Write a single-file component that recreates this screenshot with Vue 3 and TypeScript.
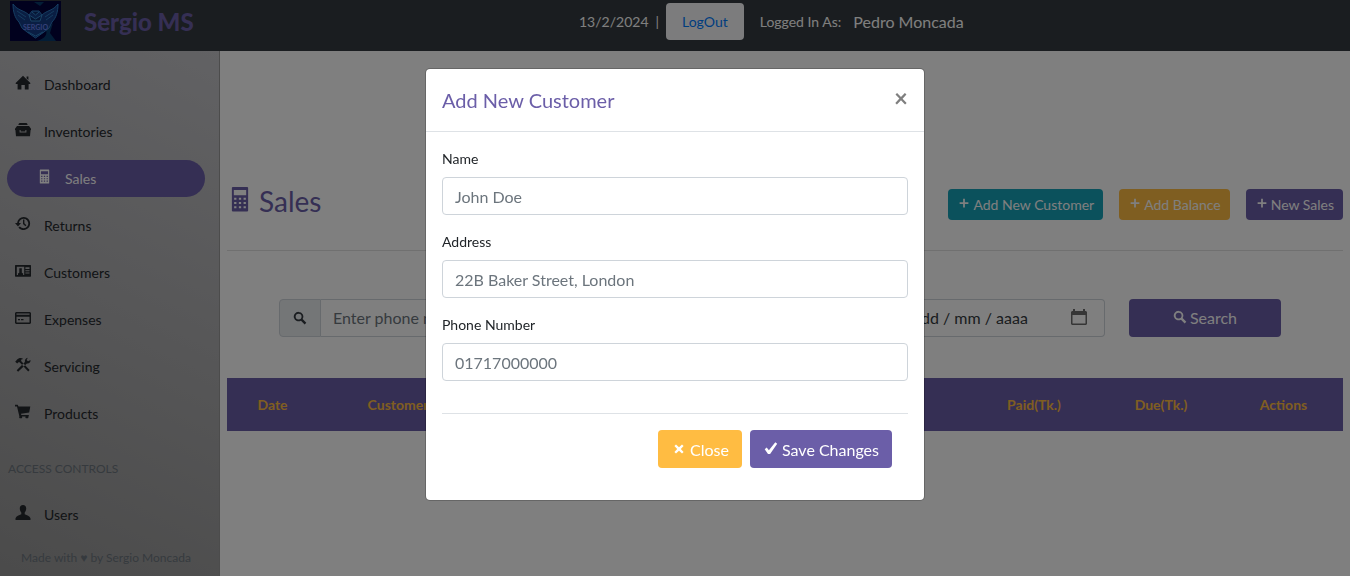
<script setup lang="ts">
import { ref } from 'vue'

interface Shape {
  d: string
}
interface NavItem {
  label: string
  icon: string
  active?: boolean
}

const icons: Record<string, Shape> = {
  home: { d: 'M8 .8 15.6 8.3 14.8 9H13.6V14.6H9.8V10H6.4V14.6H2.6V9H1.2L.4 8.3ZM11.6 1.6H13.4V5L11.6 3.4Z' },
  briefcase: { d: 'M4.500 1h7l1 1v1H3.500V2ZM2 4h12l2 2.800V8H0V6.800ZM.400 8H4.600V10.600H11.400V8H15.600L15 14.200H1ZM5.600 8h4.800v1.600H5.600Z' },
  calculator: { d: 'M3.4 0h9.2l.4.4v14.2l-.4.4H3.4L3 14.6V.4ZM4.2 1.9V5h7.6V1.9ZM4.4 6.6v1.3h1.4V6.6ZM7.3 6.6v1.3h1.4V6.6ZM10.2 6.6v1.3h1.4V6.6ZM4.4 9.2v1.3h1.4V9.2ZM7.3 9.2v1.3h1.4V9.2ZM10.2 9.2v1.3h1.4V9.2ZM4.4 11.8v1.3h1.4v-1.3ZM7.3 11.8v1.3h1.4v-1.3ZM10.2 11.8v1.3h1.4v-1.3Z' },
  history: { d: 'M8.600 1a6.500 6.500 0 1 1-5.200 10.400l1.500-1A4.700 4.700 0 1 0 3.900 7H6L3 10.600 0 7h2.100A6.500 6.500 0 0 1 8.600 1ZM8 3.600h1.400v3.700l2 2-1 1L8 7.900Z' },
  card: { d: 'M.5 2h15l.5.5v10.800l-.5.5H.5L0 13.300V2.500ZM1.800 3.700V12H3V10.600L4.300 9.700V5.200H6.800V9.700L8.100 10.600V12H9.200V3.700ZM10.400 4.200V6H14.500V4.200ZM10.400 7.200V8.300H14.500V7.200ZM10.400 9.500V10.600H14.500V9.500Z' },
  credit: { d: 'M1 2h14l1 1v10l-1 1H1l-1-1V3ZM1.500 3.400V4.700H14.500V3.400ZM1.500 6.800V12.500H14.500V6.800ZM3 9H5V10.200H3ZM6 9H8.500V10.200H6Z' },
  tools: { d: 'M2.400 2.300C4.500.4 6.700.7 8.200 1.900L6.300 2.400 6.100 4 14.600 12.900 13.200 14.400 4.600 5.300 3.400 5.300 2.200 6.600.2 4.700ZM12.800.7 11.600 3 13 4.300 15.500 3.100C15.800 5.600 13.800 7 11.900 6.500L3.100 14.700 1.700 13.300 9.900 5C9.500 3 10.700 1 12.800.7Z' },
  cart: { d: 'M0 .8h2.700l.8 1.800H15.300L14.200 8.400 6 9.700l.3 1.200H13.800v1.500h-.6a1.400 1.400 0 1 1-2.600 0H7a1.400 1.400 0 1 1-2.600 0L2 2.500H0Z' },
  user: { d: 'M8 0c2.200 0 3.300 1.500 3.200 3.500 0 1.900-.7 3.100-1.500 4v1.700c2.300 1 5 1.800 5.800 4V15H.5v-1.800c.8-2.200 3.500-3 5.800-4V7.500C5.500 6.600 4.800 5.400 4.800 3.500 4.700 1.500 5.800 0 8 0Z' },
  plus: { d: 'M7 3h2v4.200h4v1.800H9v4.200H7V9H3V7.200h4Z' },
  search: { d: 'M6.400 1a5.400 5.400 0 0 1 4.600 8.200l4.200 4.200-1.900 1.900L9.100 11A5.400 5.400 0 1 1 6.400 1Zm0 2a3.400 3.400 0 1 0 0 6.800 3.400 3.400 0 0 0 0-6.800Z' },
  cross: { d: 'M5 3.400 8 6.300 11 3.400 12.600 5 9.800 8 12.600 11 11 12.600 8 9.800 5 12.600 3.400 11 6.200 8 3.400 5Z' },
  check: { d: 'M12.300 1.300 14.200 2.700 7.100 13H5L1.700 8.200 3.700 6.600 5.900 9.200Z' },
}

const menu: NavItem[] = [
  { label: 'Dashboard', icon: 'home' },
  { label: 'Inventories', icon: 'briefcase' },
  { label: 'Sales', icon: 'calculator', active: true },
  { label: 'Returns', icon: 'history' },
  { label: 'Customers', icon: 'card' },
  { label: 'Expenses', icon: 'credit' },
  { label: 'Servicing', icon: 'tools' },
  { label: 'Products', icon: 'cart' },
]

const actions = [
  { label: 'Add New Customer', kind: 'info' },
  { label: 'Add Balance', kind: 'warning' },
  { label: 'New Sales', kind: 'primary' },
]

const columns = [
  { label: 'Date', size: 'c-date' },
  { label: 'Customer', size: 'c-customer' },
  { label: 'Total(Tk.)', size: 'c-total' },
  { label: 'Paid(Tk.)', size: 'c-paid' },
  { label: 'Due(Tk.)', size: 'c-due' },
  { label: 'Actions', size: 'c-actions' },
]

const fields = [
  { id: 'name', label: 'Name', placeholder: 'John Doe' },
  { id: 'address', label: 'Address', placeholder: '22B Baker Street, London' },
  { id: 'phone', label: 'Phone Number', placeholder: '01717000000' },
]

const open = ref(true)
const form = ref<Record<string, string>>({ name: '', address: '', phone: '' })
</script>

<template>
  <div class="page">
    <header class="topbar">
      <a class="brand" href="#">
        <svg class="logo" viewBox="0 0 51 40" aria-hidden="true">
          <rect width="51" height="40" fill="#02023c" />
          <path d="M24 1 34 1 30 5ZM27 40C33 38 38 35 36 29L43 22 40 32 46 40Z" fill="#073a6c" />
          <path d="M3 3C8 10 14 9 19 14L22 10H29L32 14C37 9 43 10 48 3C48 11 46 17 42 21L39 27 34 31 25.500 37 17 31 12 27 9 21C5 17 3 11 3 3Z" fill="#143c86" stroke="#2c7cc4" stroke-width="1" />
          <path d="M7 10 16 16M8 14 15 19M44 10 35 16M43 14 36 19" stroke="#2a78bc" stroke-width="1" />
          <path d="M19 14 25.500 18 32 14 30 20H21ZM22 11 25.500 14 29 11" fill="#0c2a66" stroke="#3488cc" stroke-width="1" />
          <path d="M18 31 25.500 35 33 31" fill="none" stroke="#2f86c8" />
          <text x="25.500" y="29" text-anchor="middle" font-size="7" font-weight="700" fill="#6a80ee">SERGIO</text>
        </svg>
        <span class="brand-name">Sergio MS</span>
      </a>
      <div class="session">
        <span>13/2/2024</span>
        <span>|</span>
        <button class="logout" type="button">LogOut</button>
        <span class="as">Logged In As:</span>
        <span class="user">Pedro Moncada</span>
      </div>
    </header>

    <div class="body">
      <aside class="sidebar">
        <nav>
          <a v-for="m in menu" :key="m.label" href="#" class="item" :class="{ active: m.active }">
            <svg class="icon" viewBox="0 0 16 16" aria-hidden="true"><path fill-rule="evenodd" :d="icons[m.icon].d" /></svg>
            {{ m.label }}
          </a>
          <h2 class="group">ACCESS CONTROLS</h2>
          <a href="#" class="item">
            <svg class="icon" viewBox="0 0 16 16" aria-hidden="true"><path :d="icons.user.d" /></svg>
            Users
          </a>
        </nav>
        <p class="credit">Made with ♥ by Sergio Moncada</p>
      </aside>

      <main class="content">
        <div class="heading">
          <h1>
            <svg class="icon" viewBox="0 0 16 16" aria-hidden="true"><path fill-rule="evenodd" :d="icons.calculator.d" /></svg>
            Sales
          </h1>
          <div class="actions">
            <button v-for="a in actions" :key="a.label" type="button" class="btn small" :class="a.kind">
              <svg class="icon" viewBox="0 0 16 16" aria-hidden="true"><path :d="icons.plus.d" /></svg>
              {{ a.label }}
            </button>
          </div>
        </div>

        <form class="filters" @submit.prevent>
          <div class="group-input">
            <label class="addon" for="q-phone" aria-label="Phone number">
              <svg class="icon" viewBox="0 0 16 16" aria-hidden="true"><path fill-rule="evenodd" :d="icons.search.d" /></svg>
            </label>
            <input id="q-phone" type="text" placeholder="Enter phone number" />
          </div>
          <div class="group-input">
            <label class="addon" for="q-date" aria-label="Date">
              <svg class="icon" viewBox="0 0 16 16" aria-hidden="true"><path fill-rule="evenodd" :d="icons.search.d" /></svg>
            </label>
            <div class="date-box">
              <input id="q-date" type="text" value="dd / mm / aaaa" />
              <button type="button" class="picker" aria-label="Pick a date">
                <svg viewBox="0 0 18 18" aria-hidden="true"><path fill-rule="evenodd" d="M3 1H5V3H13V1H15V3H16L17 4V16L16 17H2L1 16V4L2 3H3ZM2.500 7V15.500H15.500V7Z" /></svg>
              </button>
            </div>
          </div>
          <button type="submit" class="btn primary search">
            <svg class="icon" viewBox="0 0 16 16" aria-hidden="true"><path fill-rule="evenodd" :d="icons.search.d" /></svg>
            Search
          </button>
        </form>

        <table class="sales">
          <thead>
            <tr>
              <th v-for="c in columns" :key="c.label" scope="col" :class="c.size">{{ c.label }}</th>
            </tr>
          </thead>
        </table>
      </main>
    </div>

    <div v-if="open" class="backdrop">
      <div class="modal" role="dialog" aria-modal="true" aria-labelledby="modal-title">
        <div class="modal-head">
          <h2 id="modal-title">Add New Customer</h2>
          <button type="button" class="dismiss" aria-label="Dismiss" @click="open = false">×</button>
        </div>
        <form class="modal-body" @submit.prevent="open = false">
          <div v-for="f in fields" :key="f.id" class="field">
            <label :for="f.id">{{ f.label }}</label>
            <input :id="f.id" v-model="form[f.id]" type="text" :placeholder="f.placeholder" />
          </div>
          <div class="modal-foot">
            <button type="button" class="btn warning" @click="open = false">
              <svg class="icon" viewBox="0 0 16 16" aria-hidden="true"><path :d="icons.cross.d" /></svg>
              Close
            </button>
            <button type="submit" class="btn primary">
              <svg class="icon" viewBox="0 0 16 16" aria-hidden="true"><path :d="icons.check.d" /></svg>
              Save Changes
            </button>
          </div>
        </form>
      </div>
    </div>
  </div>
</template>

<style>
body {
  margin: 0;
}
</style>

<style scoped>
.page {
  min-height: 100vh;
  display: flex;
  flex-direction: column;
  font-family: Lato, "Liberation Sans", sans-serif;
  font-size: 14px;
  line-height: 21px;
  color: #212529;
  background: #fff;
}
.page * {
  box-sizing: border-box;
}
button,
input {
  font: inherit;
  margin: 0;
}
h1,
h2,
p {
  margin: 0;
  font-weight: 400;
}
a {
  color: inherit;
  text-decoration: none;
}
.icon {
  width: 1em;
  height: 1em;
  flex: none;
  fill: currentColor;
}
.topbar {
  height: 51px;
  flex: none;
  display: flex;
  align-items: flex-start;
  background: #343a40;
  color: #fff;
}
.brand {
  width: 579px;
  display: flex;
  align-items: center;
  gap: 23px;
  padding: 1px 0 0 10px;
}
.logo {
  width: 51px;
  height: 40px;
}
.brand-name {
  padding-top: 2px;
  font-size: 24px;
  line-height: 36px;
  font-weight: 900;
  color: #6b5ea8;
}
.session {
  display: flex;
  align-items: center;
  gap: 7px;
  padding-top: 3px;
}
.logout {
  height: 37px;
  padding: 0 16px;
  border: 0;
  border-radius: 4px;
  background: #f8f9fa;
  color: #007bff;
}
.as {
  margin-left: 9px;
}
.user {
  margin-left: 5px;
  font-size: 16px;
}
.body {
  flex: 1;
  display: flex;
}
.sidebar {
  width: 220px;
  flex: none;
  display: flex;
  flex-direction: column;
  justify-content: space-between;
  padding: 15px 14px 8px 7px;
  border-right: 1px solid #999;
  background: linear-gradient(25deg, #969696, #c4c4c8);
}
nav {
  display: flex;
  flex-direction: column;
  gap: 10px;
}
.item {
  display: flex;
  align-items: center;
  gap: 13px;
  height: 37px;
  padding-left: 8px;
  color: #24282c;
}
.item .icon {
  width: 16px;
  height: 16px;
  margin-bottom: 3px;
}
.item.active {
  padding-left: 30px;
  border-radius: 19px;
  background: #6b5ea8;
  color: #fff;
}
.item.active .icon {
  width: 15px;
}
.group {
  padding: 16px 0 7px 1px;
  font-size: 12px;
  line-height: 21px;
  color: #6c757d;
}
.credit {
  text-align: center;
  font-size: 12px;
  color: #6c757d;
}
.content {
  flex: 1;
  min-width: 0;
  padding: 133px 7px 0;
}
.heading {
  display: flex;
  justify-content: space-between;
  align-items: flex-start;
  padding: 0 0 30px;
  border-bottom: 1px solid #e0e0e0;
}
h1 {
  display: flex;
  align-items: center;
  gap: 6px;
  font-size: 28px;
  line-height: 34px;
  color: #6b5ea8;
}
.heading h1 .icon {
  width: 26px;
  margin-bottom: 2px;
}
.actions {
  display: flex;
  gap: 16px;
  padding-top: 5px;
}
.btn {
  display: inline-flex;
  align-items: center;
  justify-content: center;
  gap: 3px;
  height: 38px;
  padding: 2px 13px 0;
  border: 0;
  border-radius: 4px;
  font-size: 16px;
  line-height: 24px;
  color: #fff;
  white-space: nowrap;
}
.btn .icon {
  margin-bottom: 3px;
}
.btn.small {
  gap: 2px;
  height: 31px;
  padding: 0 9px;
  font-size: 14px;
  line-height: 21px;
}
.info {
  background: #17a2b8;
}
.warning {
  background: #ffbc42;
}
.primary {
  background: #6b5ea8;
}
.filters {
  display: grid;
  grid-template-columns: 564fr 238fr 152fr;
  gap: 24px;
  padding: 48px 62px 0 52px;
  font-size: 16px;
  line-height: 24px;
}
.group-input {
  display: flex;
  min-width: 0;
  height: 38px;
}
.btn.search {
  padding: 0;
}
.btn.search .icon {
  width: 14px;
  height: 14px;
}
.addon {
  width: 42px;
  flex: none;
  display: flex;
  align-items: center;
  justify-content: center;
  border: 1px solid #ced4da;
  border-radius: 4px 0 0 4px;
  background: #e9ecef;
  color: #343a40;
}
.addon .icon {
  width: 14px;
  height: 14px;
}
.group-input input {
  flex: 1;
  min-width: 0;
  width: 100%;
  padding: 0 12px;
  border: 1px solid #ced4da;
  border-left: 0;
  border-radius: 0 4px 4px 0;
  background: #fff;
  color: #343a40;
}
input::placeholder {
  color: #6c757d;
  opacity: 1;
}
.date-box {
  flex: 1;
  min-width: 0;
  display: flex;
  border: 1px solid #ced4da;
  border-left: 0;
  border-radius: 0 4px 4px 0;
}
.group-input .date-box input {
  border: 0;
  padding-right: 0;
}
.picker {
  flex: none;
  display: flex;
  align-items: center;
  padding: 0 16px 2px 0;
  border: 0;
  background: none;
}
.picker svg {
  width: 18px;
  height: 18px;
  fill: #6c6c6c;
}
.sales {
  width: 100%;
  margin-top: 41px;
  table-layout: fixed;
  border-collapse: collapse;
}
th {
  height: 53px;
  padding: 0;
  text-align: center;
  font-weight: 700;
  background: #6b5ea8;
  color: #ffbc42;
}
.c-date {
  width: 91px;
}
.c-customer {
  width: 160px;
}
.c-paid {
  width: 128px;
}
.c-due {
  width: 126px;
}
.c-actions {
  width: 119px;
}
.backdrop {
  position: fixed;
  inset: 0;
  display: flex;
  justify-content: center;
  align-items: flex-start;
  padding-top: 68px;
  background: rgba(0, 0, 0, 0.5);
}
.modal {
  width: 500px;
  max-width: 100%;
  border: 1px solid rgba(0, 0, 0, 0.2);
  border-radius: 5px;
  background: #fff;
  background-clip: padding-box;
}
.modal-head {
  display: flex;
  justify-content: space-between;
  align-items: center;
  padding: 16px;
  border-bottom: 1px solid #dee2e6;
}
.modal-head h2 {
  font-size: 20px;
  line-height: 30px;
  color: #6b5ea8;
}
.dismiss {
  padding: 0 0 4px;
  border: 0;
  background: none;
  font-size: 24px;
  line-height: 24px;
  font-weight: 700;
  color: #7f7f7f;
}
.modal-body {
  padding: 16px;
}
.field {
  display: flex;
  flex-direction: column;
  gap: 8px;
  margin-bottom: 16px;
}
.field input {
  height: 38px;
  padding: 0 12px;
  border: 1px solid #ced4da;
  border-radius: 4px;
  font-size: 16px;
  line-height: 24px;
  color: #495057;
}
.modal-foot {
  display: flex;
  justify-content: flex-end;
  gap: 8px;
  margin-top: 32px;
  padding: 16px;
  border-top: 1px solid #dee2e6;
}
</style>
